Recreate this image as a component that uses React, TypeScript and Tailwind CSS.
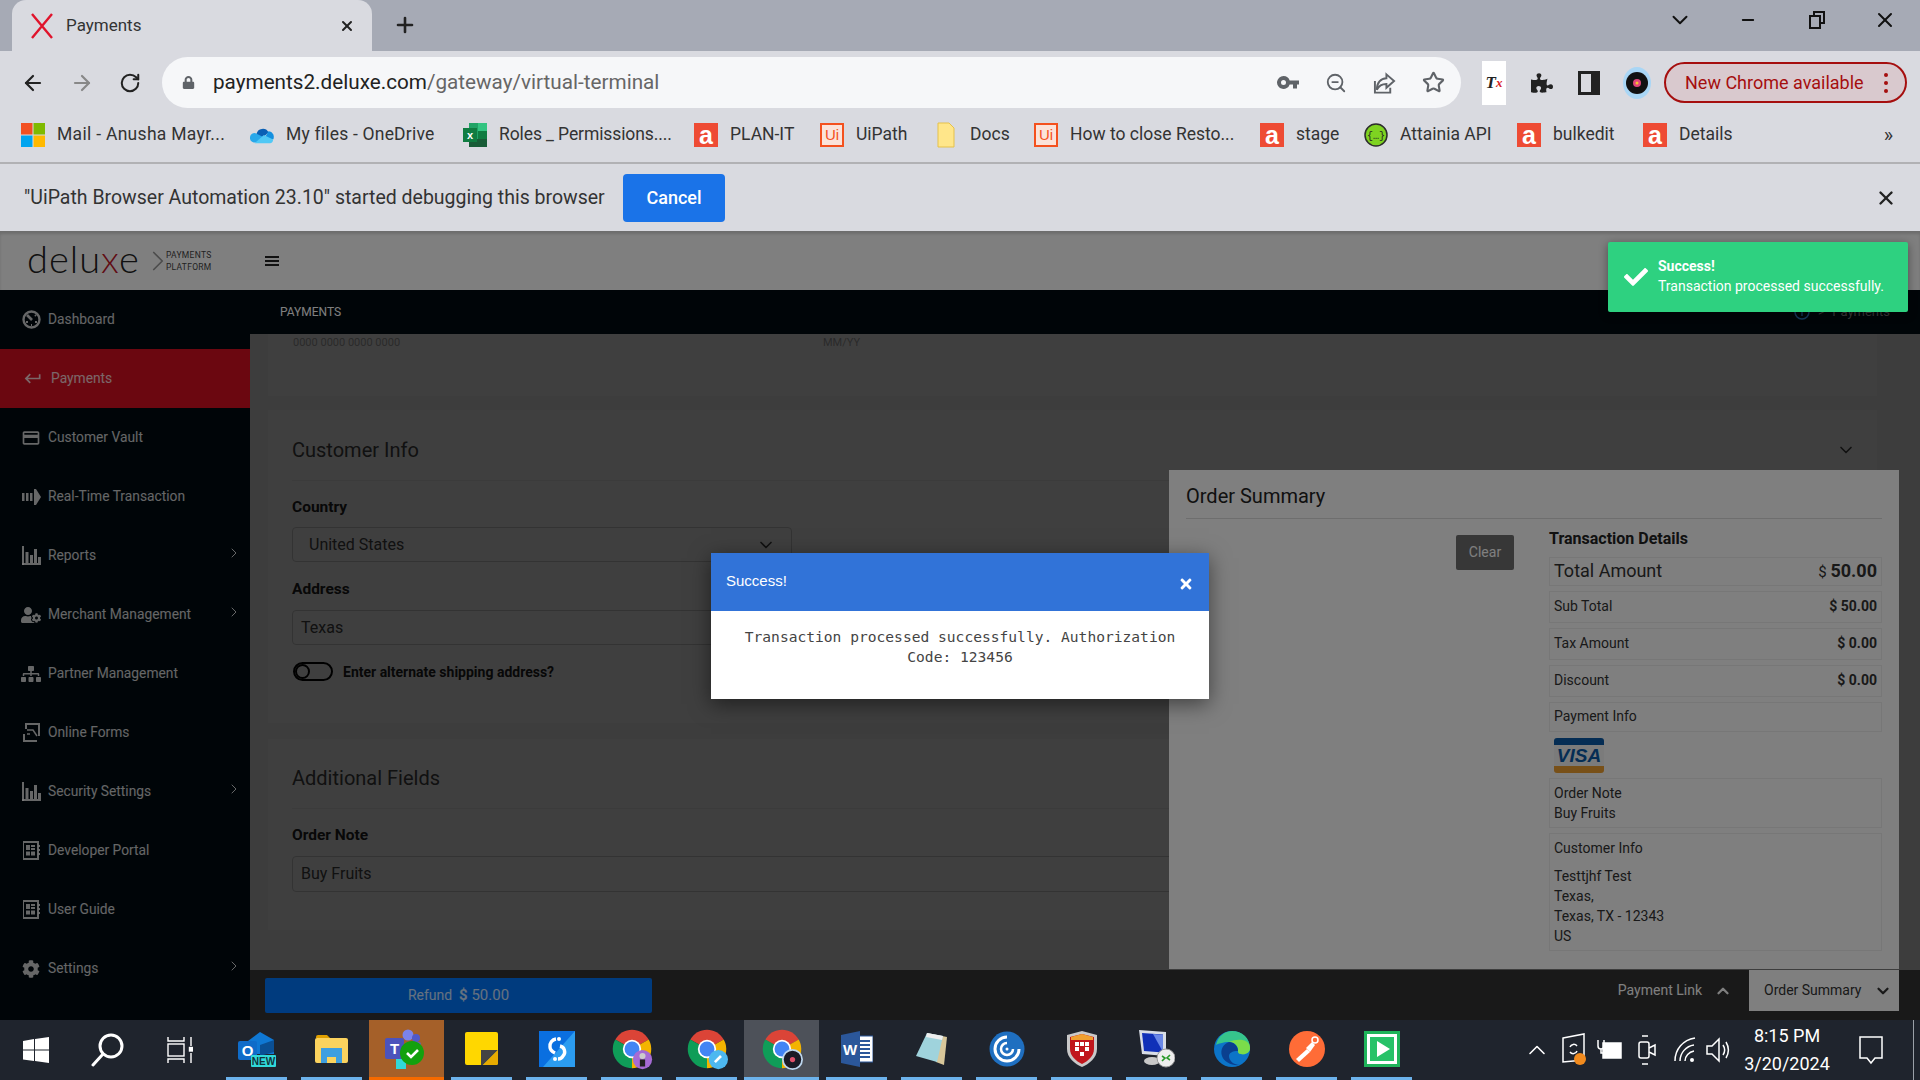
import React from "react";
import { ArrowLeft, ArrowRight, RotateCw, ZoomOut, Star, X, Plus, ChevronDown, ChevronUp, ChevronRight, Minus } from "lucide-react";
import { FaUserCog, FaSitemap, FaCog, FaPuzzlePiece, FaLock, FaCheck, FaTimes } from "react-icons/fa";
import { MdKeyboardReturn, MdPayment } from "react-icons/md";

const DashIcon = () => (
  <svg width="19" height="19" viewBox="0 0 19 19" fill="none" stroke="currentColor">
    <circle cx="9.5" cy="9.5" r="8" strokeWidth="2.4" />
    <path d="M5 5l5 5" strokeWidth="2.6" />
    <path d="M13 5l1 1M4 12h2M13 12h2M9 15h1" strokeWidth="2" />
  </svg>
);

const BarsIcon = () => (
  <svg width="19" height="19" viewBox="0 0 19 19" fill="currentColor">
    <rect x="0" y="0" width="2" height="19" />
    <rect x="0" y="17" width="19" height="2" />
    <rect x="3.5" y="6" width="3" height="11" />
    <rect x="8" y="9" width="3" height="8" />
    <rect x="12" y="3" width="3" height="14" />
    <rect x="16" y="11" width="3" height="6" />
  </svg>
);

const RealTimeIcon = () => (
  <svg width="19" height="16" viewBox="0 0 19 16" fill="currentColor">
    <rect x="0" y="4" width="2.5" height="8" />
    <rect x="4" y="4" width="2.5" height="8" />
    <rect x="8" y="4" width="2.5" height="8" />
    <path d="M12 0h2l5 8-5 8h-2z" />
  </svg>
);

const FormsIcon = () => (
  <svg width="17" height="19" viewBox="0 0 17 19" fill="none" stroke="currentColor" strokeWidth="2">
    <path d="M3 6V1h13v12M14 18H1v-7" />
    <path d="M4 7h6l4 6M4 11h3" strokeWidth="1.5" />
  </svg>
);

const PortalIcon = () => (
  <svg width="17" height="19" viewBox="0 0 17 19" fill="currentColor">
    <path d="M0 1h15v17H0z" fillOpacity="0" stroke="currentColor" strokeWidth="2" />
    <rect x="3" y="4" width="4" height="5" />
    <rect x="8" y="4" width="4" height="2" />
    <rect x="8" y="7" width="4" height="2" />
    <rect x="3" y="10.5" width="4" height="4" />
    <rect x="8" y="10.5" width="4" height="4" />
    <rect x="15.5" y="4" width="1.5" height="2" />
    <rect x="15.5" y="8" width="1.5" height="2" />
    <rect x="15.5" y="12" width="1.5" height="2" />
  </svg>
);

const navItems = [
  { label: "Dashboard", icon: <DashIcon /> },
  { label: "Payments", icon: <MdKeyboardReturn size={23} />, active: true },
  { label: "Customer Vault", icon: <MdPayment size={22} /> },
  { label: "Real-Time Transaction", icon: <RealTimeIcon /> },
  { label: "Reports", icon: <BarsIcon />, arrow: true },
  { label: "Merchant Management", icon: <FaUserCog size={20} />, arrow: true },
  { label: "Partner Management", icon: <FaSitemap size={20} /> },
  { label: "Online Forms", icon: <FormsIcon /> },
  { label: "Security Settings", icon: <BarsIcon />, arrow: true },
  { label: "Developer Portal", icon: <PortalIcon /> },
  { label: "User Guide", icon: <PortalIcon /> },
  { label: "Settings", icon: <FaCog size={18} />, arrow: true },
];

const LetterA = () => (
  <div className="w-6 h-6 bg-[#ee4b34] flex items-center justify-center text-white font-bold text-[25px] leading-[24px] font-['Liberation_Sans',sans-serif]">a</div>
);

const UiIcon = () => (
  <div className="w-6 h-6 border-2 border-[#f4511e] bg-[#fbe3da] flex items-center justify-center text-[#f4511e] text-[15px] leading-none font-['Liberation_Sans',sans-serif]">Ui</div>
);

const MsIcon = () => (
  <svg width="24" height="24" viewBox="0 0 24 24">
    <rect width="11.5" height="11.5" fill="#f25022" />
    <rect x="12.5" width="11.5" height="11.5" fill="#7fba00" />
    <rect y="12.5" width="11.5" height="11.5" fill="#00a4ef" />
    <rect x="12.5" y="12.5" width="11.5" height="11.5" fill="#ffb900" />
  </svg>
);

const OneDriveIcon = () => (
  <svg width="26" height="24" viewBox="0 0 26 24">
    <path d="M7 11a7 7 0 0 1 13-2l-8 8-8-3z" fill="#0a5fb4" />
    <path d="M20 8a6 6 0 0 1 5 9l-9-2z" fill="#1490df" />
    <path d="M6 10a5 5 0 0 0-2 10h6l6-5z" fill="#28a8ea" />
    <path d="M5 21h17a4 4 0 0 0 3-4l-10-5z" fill="#50c8f5" />
  </svg>
);

const ExcelIcon = () => (
  <svg width="24" height="26" viewBox="0 0 24 26">
    <rect x="6" y="1" width="18" height="24" fill="#21a366" />
    <rect x="15" y="1" width="9" height="8" fill="#33c481" />
    <rect x="6" y="17" width="18" height="8" fill="#185c37" />
    <rect x="15" y="9" width="9" height="8" fill="#107c41" />
    <rect x="0" y="6" width="14" height="14" fill="#107c41" />
    <text x="7" y="17" textAnchor="middle" fill="#fff" fontSize="11" fontWeight="700" fontFamily="Liberation Sans">x</text>
  </svg>
);

const DocsIcon = () => (
  <svg width="18" height="26" viewBox="0 0 18 26">
    <path d="M1 1h11l5 5v19H1z" fill="#ffe68a" stroke="#e5c14b" />
  </svg>
);

const AttainiaIcon = () => (
  <svg width="24" height="24" viewBox="0 0 24 24">
    <circle cx="12" cy="12" r="11" fill="#7ed321" stroke="#2d2d2d" strokeWidth="1.5" />
    <text x="12" y="15.5" textAnchor="middle" fill="#222" fontSize="10" fontFamily="Liberation Mono">{"{…}"}</text>
  </svg>
);

const bookmarks = [
  { label: "Mail - Anusha Mayr...", icon: <MsIcon />, width: "w-[168px] tracking-[0.3px]", pad: "pr-[25px]" },
  { label: "My files - OneDrive", icon: <OneDriveIcon />, width: "w-[152px] tracking-[0.2px]", pad: "pr-[25px]" },
  { label: "Roles _ Permissions....", icon: <ExcelIcon />, width: "w-[169px] tracking-[-0.1px]", pad: "pr-[26px]" },
  { label: "PLAN-IT", icon: <LetterA />, width: "w-[65px]", pad: "pr-[25px]" },
  { label: "UiPath", icon: <UiIcon />, width: "w-[51px]", pad: "pr-[27px]" },
  { label: "Docs", icon: <DocsIcon />, width: "w-[39px]", pad: "pr-[25px]" },
  { label: "How to close Resto...", icon: <UiIcon />, width: "w-[165px]", pad: "pr-[25px]" },
  { label: "stage", icon: <LetterA />, width: "w-[44px]", pad: "pr-[24px]" },
  { label: "Attainia API", icon: <AttainiaIcon />, width: "w-[92px]", pad: "pr-[25px]" },
  { label: "bulkedit", icon: <LetterA />, width: "w-[64px]", pad: "pr-[26px]" },
  { label: "Details", icon: <LetterA />, width: "w-[53px]", pad: "" },
];

const ChromeBase = ({ children }: { children?: React.ReactNode }) => (
  <svg width="42" height="42" viewBox="0 0 48 48">
    <path d="M24 24L4.95 13A22 22 0 0 1 43.05 13Z" fill="#db4437" />
    <path d="M24 24L43.05 13A22 22 0 0 1 24 46Z" fill="#f4b400" />
    <path d="M24 24L24 46A22 22 0 0 1 4.95 13Z" fill="#0f9d58" />
    <circle cx="24" cy="24" r="10.5" fill="#fff" />
    <circle cx="24" cy="24" r="8.5" fill="#4285f4" />
    {children}
  </svg>
);

const taskIcons: { key: string; node: React.ReactNode; cell?: string; bar?: string }[] = [
  {
    key: "outlook",
    node: (
      <svg width="38" height="36" viewBox="0 0 38 36">
        <path d="M10 10L22 1l14 8v14H10z" fill="#0f78d4" />
        <path d="M22 14l14-5v12l-14 4z" fill="#0a4f94" />
        <rect x="0" y="10" width="19" height="19" rx="2" fill="#0f6cc9" />
        <text x="9.5" y="25" textAnchor="middle" fill="#fff" fontSize="15" fontWeight="700" fontFamily="Liberation Sans">O</text>
        <rect x="13" y="24" width="25" height="12" rx="1" fill="#30d9d9" />
        <text x="25.5" y="34" textAnchor="middle" fill="#12333a" fontSize="10" fontWeight="700" fontFamily="Liberation Sans">NEW</text>
      </svg>
    ),
  },
  {
    key: "files",
    node: (
      <svg width="34" height="28" viewBox="0 0 34 28">
        <path d="M1 2a2 2 0 0 1 2-2h9l3 3h-14z" fill="#e0a000" />
        <rect x="0" y="3" width="33" height="25" rx="2" fill="#fbd35e" />
        <path d="M6 13h21v15h-6v-6h-9v6H6z" fill="#3e9fe0" />
      </svg>
    ),
  },
  {
    key: "teams",
    cell: "bg-[#a56029]",
    bar: "w-full bg-[#f56a00]",
    node: (
      <svg width="44" height="40" viewBox="0 0 44 40">
        <circle cx="23" cy="6" r="5.5" fill="#7b83eb" />
        <circle cx="31" cy="9" r="4" fill="#5059c9" />
        <rect x="21" y="13" width="15" height="15" rx="2" fill="#6264a7" />
        <rect x="0" y="9" width="19" height="21" rx="2" fill="#4b53bc" />
        <text x="9.5" y="25" textAnchor="middle" fill="#fff" fontSize="15" fontWeight="700" fontFamily="Liberation Sans">T</text>
        <rect x="11" y="30" width="10" height="10" fill="#30d9d9" />
        <circle cx="27" cy="24" r="12" fill="#13a10e" />
        <path d="M22 24l4 4 7-7" fill="none" stroke="#fff" strokeWidth="2.6" />
      </svg>
    ),
  },
  {
    key: "sticky",
    node: (
      <svg width="34" height="34" viewBox="0 0 34 34">
        <rect x="0" y="0" width="33" height="33" rx="2" fill="#ffd700" />
        <path d="M16 33V18h17L18 33z" fill="#444" />
        <path d="M33 18v13a2 2 0 0 1-2 2H18z" fill="#e8ab00" />
      </svg>
    ),
  },
  {
    key: "s-app",
    node: (
      <svg width="36" height="36" viewBox="0 0 36 36">
        <rect width="36" height="36" fill="#0a6fe0" />
        <path d="M36 0v36H4z" fill="#2b9cf0" />
        <path d="M17 8a7 7 0 0 0-6 8c0 3 3 5 5 6" fill="none" stroke="#fff" strokeWidth="3.4" />
        <path d="M21 15a6 6 0 0 1 3 10c-1 2-3 3-5 3" fill="none" stroke="#fff" strokeWidth="3.4" />
        <circle cx="20" cy="8" r="2" fill="#fff" />
        <circle cx="16" cy="28" r="2" fill="#fff" />
      </svg>
    ),
  },
  {
    key: "chrome-a",
    node: (
      <ChromeBase>
        <circle cx="36" cy="36" r="11" fill="#a66bd4" />
        <circle cx="36" cy="32" r="3.5" fill="#ccc" />
        <rect x="33" y="36" width="6" height="8" fill="#222" />
      </ChromeBase>
    ),
  },
  {
    key: "chrome-b",
    node: (
      <ChromeBase>
        <circle cx="37" cy="36" r="11" fill="#4db8f0" />
        <path d="M33 39l7-7" stroke="#fff" strokeWidth="3" />
      </ChromeBase>
    ),
  },
  {
    key: "chrome-c",
    cell: "bg-[#4d5159]",
    bar: "w-full bg-[#6cb2eb]",
    node: (
      <ChromeBase>
        <circle cx="36" cy="36" r="11" fill="#1b1b26" stroke="#bcd6ee" strokeWidth="2" />
        <circle cx="36" cy="36" r="3" fill="#e0506a" />
      </ChromeBase>
    ),
  },
  {
    key: "word",
    node: (
      <svg width="32" height="36" viewBox="0 0 32 36">
        <rect x="9" y="5" width="23" height="26" fill="#fff" stroke="#2b579a" />
        <path d="M18 10h11M18 14h11M18 18h11M18 22h11M18 26h11" stroke="#2b579a" strokeWidth="2" />
        <path d="M0 4l19-4v36L0 32z" fill="#2b579a" />
        <text x="9" y="24" textAnchor="middle" fill="#fff" fontSize="15" fontWeight="700" fontFamily="Liberation Sans">W</text>
      </svg>
    ),
  },
  {
    key: "notepad",
    node: (
      <svg width="34" height="34" viewBox="0 0 34 34">
        <path d="M12 1l20 4-3 28-8-3z" fill="#d8c79a" />
        <path d="M12 1L28 4 22 30 1 24z" fill="#9fd3dc" />
        <path d="M12 1L28 4 27 8 11 5z" fill="#eee" />
      </svg>
    ),
  },
  {
    key: "citrix",
    node: (
      <svg width="36" height="36" viewBox="0 0 36 36">
        <circle cx="18" cy="18" r="17.5" fill="#1f6fc0" />
        <path d="M30 18A12 12 0 1 1 18 6" fill="none" stroke="#fff" strokeWidth="3" />
        <path d="M24 18a6 6 0 1 1-6-6" fill="none" stroke="#fff" strokeWidth="2.5" />
        <circle cx="18" cy="18" r="1.5" fill="#fff" />
      </svg>
    ),
  },
  {
    key: "shield",
    node: (
      <svg width="30" height="36" viewBox="0 0 30 36">
        <path d="M15 0l15 4v14c0 9-8 15-15 18C8 33 0 27 0 18V4z" fill="#c9c9c9" />
        <path d="M15 3l12 3v12c0 7-6 12-12 15C9 30 3 25 3 18V6z" fill="#c1161c" />
        <path d="M4 6l11-3 11 3v3H4z" fill="#f0a030" />
        <path d="M8 11h4v4H8zM13 11h4v4h-4zM18 11h4v4h-4zM8 16h4v4H8zM18 16h4v4h-4zM13 21h4v4h-4z" fill="#fff" />
      </svg>
    ),
  },
  {
    key: "remote",
    node: (
      <svg width="36" height="38" viewBox="0 0 36 38">
        <path d="M0 0l27 2v24L3 24z" fill="#d8dde6" />
        <path d="M3 3l21 1.5v18L5 21z" fill="#1030b8" />
        <path d="M14 4l10 1v17z" fill="#6a88e8" />
        <ellipse cx="13" cy="31" rx="8" ry="4" fill="#c8c8c8" />
        <circle cx="27" cy="28" r="9" fill="#eee" stroke="#999" />
        <path d="M23 31l3-3-3-2M31 25l-3 3 3 2" fill="none" stroke="#2a9a2a" strokeWidth="1.6" />
      </svg>
    ),
  },
  {
    key: "edge",
    node: (
      <svg width="36" height="36" viewBox="0 0 36 36">
        <circle cx="18" cy="18" r="18" fill="#0c74c8" />
        <path d="M2 14C4 5 11 0 18 0c10 0 18 7 18 17 0 5-5 7-9 6-2 0-3-1-3-3 1-4-3-9-9-9-6 0-11 2-13 3z" fill="#36c58c" />
        <path d="M36 17c0 5-5 7-9 6-2 0-3-1-3-3 1-4-3-9-9-9C24 7 36 8 36 17z" fill="#7bdc4a" />
        <path d="M15 11c-6 2-9 8-7 14s10 10 18 9c-6 0-11-4-11-9 0-3 3-5 9-5 0-5-4-9-9-9z" fill="#0a3f8f" />
      </svg>
    ),
  },
  {
    key: "postman",
    node: (
      <svg width="36" height="36" viewBox="0 0 36 36">
        <circle cx="18" cy="18" r="18" fill="#ff6c37" />
        <path d="M7 28l11-10 3 3-11 10z" fill="#fff" />
        <path d="M17 17l6-6 3 3-5 7z" fill="#fff" />
        <circle cx="26" cy="9" r="3" fill="none" stroke="#fff" strokeWidth="1.5" />
      </svg>
    ),
  },
  {
    key: "player",
    node: (
      <svg width="36" height="36" viewBox="0 0 36 36">
        <rect width="36" height="36" fill="#1fb45a" />
        <rect x="3" y="3" width="30" height="30" fill="#fff" />
        <rect x="6" y="6" width="24" height="24" fill="#27c268" />
        <path d="M13 10l13 8-13 8z" fill="#fff" />
      </svg>
    ),
  },
];

const TaskCell = ({ node, cell, bar }: { node: React.ReactNode; cell?: string; bar?: string }) => (
  <div className={`relative w-[75px] h-full flex items-center justify-center ${cell || ""}`}>
    <div className="mt-[-2px] flex items-center justify-center">{node}</div>
    <div className={`absolute bottom-0 h-[3px] ${bar || "w-[61px] bg-[#6cb2eb]"}`} />
  </div>
);

const SummaryRow = ({ label, value, box }: { label: string; value: string; box: string }) => (
  <div className={`flex items-center justify-between border border-[#eeeeee] pl-1 pr-1 pb-[2px] text-[14px] text-[#333] ${box}`}>
    <span>{label}</span>
    <span className="font-bold">{value}</span>
  </div>
);

const VisaCard = () => (
  <div className="w-[50px] h-[35px] ml-[5px] mt-[6px] mb-[5px] rounded-[3px] overflow-hidden flex flex-col bg-[#f6f6f6]">
    <div className="h-[7px] bg-[#0a5aa8]" />
    <div className="flex-1 flex items-center justify-center italic font-bold text-[19px] leading-none text-[#0a5aa8] font-['Liberation_Sans',sans-serif]">VISA</div>
    <div className="h-[7px] bg-[#f0a030]" />
  </div>
);

export default function App() {
  return (
    <div className="relative w-[1920px] h-[1080px] flex flex-col overflow-hidden font-['Roboto',sans-serif] bg-white">
      {/* browser tabs */}
      <div className="h-[51px] bg-[#a6aab5] flex items-end shrink-0">
        <div className="ml-3 w-[360px] h-[51px] bg-[#d9dae0] rounded-t-[14px] flex items-center pl-[18px] pr-[17px] text-[#333]">
          <svg width="24" height="26" viewBox="0 0 24 26" fill="none" stroke="#e0142c" strokeWidth="2.4">
            <path d="M2 1l20 24M22 1L2 25" />
          </svg>
          <span className="ml-3 text-[17px]">Payments</span>
          <X size={16} strokeWidth={3} className="ml-auto text-[#222]" />
        </div>
        <Plus size={24} strokeWidth={2.6} className="ml-[21px] mb-[14px] text-[#222]" />
        <div className="ml-auto flex items-center mb-[18px] text-[#111]">
          <ChevronDown size={26} strokeWidth={1.8} />
          <Minus size={18} strokeWidth={2.4} className="ml-[46px]" />
          <svg width="16" height="18" viewBox="0 0 16 18" fill="none" stroke="#111" strokeWidth="2" className="ml-[52px]">
            <rect x="1" y="5" width="10" height="12" />
            <path d="M5 5V1h10v11h-4" />
          </svg>
          <X size={24} strokeWidth={2} className="ml-[48px] mr-[23px]" />
        </div>
      </div>

      {/* address bar */}
      <div className="h-[63px] bg-[#d9dae0] flex items-center shrink-0">
        <ArrowLeft size={24} strokeWidth={2.2} className="ml-[21px] text-[#222]" />
        <ArrowRight size={24} strokeWidth={2.2} className="ml-[25px] text-[#888]" />
        <RotateCw size={22} strokeWidth={2.2} className="ml-[25px] text-[#222]" />
        <div className="ml-[21px] w-[1299px] h-[51px] rounded-full bg-[#f6f7f9] flex items-center pl-[20px] pr-[16px]">
          <FaLock size={13} className="text-[#5f6368]" />
          <span className="ml-[18px] text-[20.7px] text-[#222]">
            payments2.deluxe.com<span className="text-[#666]">/gateway/virtual-terminal</span>
          </span>
          <div className="ml-auto flex items-center text-[#5f6368] gap-[26px]">
            <svg width="22" height="14" viewBox="0 0 22 14" fill="#5f6368">
              <path d="M6.5 0a6.5 6.5 0 0 1 6.2 4.5H22v4h-2v4h-4v-4h-3.300A6.500 6.500 0 1 1 6.500 0zm0 4a2.500 2.500 0 1 0 0 5 2.500 2.500 0 0 0 0-5z" />
            </svg>
            <ZoomOut size={22} strokeWidth={2} />
            <svg width="23" height="24" viewBox="0 0 24 24" fill="none" stroke="#5f6368" strokeWidth="2">
              <path d="M2 10v12h16v-5" />
              <path d="M14 3l8 7-8 7v-4c-5 0-8 2-10 6 0-7 4-12 10-12z" />
            </svg>
            <Star size={23} strokeWidth={2.2} />
          </div>
        </div>
        <div className="ml-[21px] w-6 h-[44px] bg-white flex items-center justify-center italic font-bold text-[#222] text-[17px] font-['Liberation_Serif',serif]">
          T<span className="text-[#d8232a] text-[13px]">x</span>
        </div>
        <FaPuzzlePiece size={22} className="ml-[25px] text-[#222]" />
        <svg width="22" height="24" viewBox="0 0 22 24" className="ml-[25px]">
          <rect x="1.5" y="1.500" width="19" height="21" fill="none" stroke="#222" strokeWidth="3" />
          <rect x="13" y="2" width="7" height="20" fill="#222" />
        </svg>
        <svg width="28" height="32" viewBox="0 0 28 32" className="ml-[23px]">
          <ellipse cx="14" cy="16" rx="14" ry="16" fill="#a9d6f5" />
          <circle cx="14" cy="16" r="11" fill="#111" />
          <circle cx="14" cy="16" r="4" fill="#e0457b" />
          <circle cx="14" cy="16" r="1.5" fill="#f4c430" />
        </svg>
        <div className="ml-[13px] w-[243px] h-[41px] rounded-full border-2 border-[#a50e0e] bg-[#d9c9ce] flex items-center pl-[19px] pr-[17px] text-[#a50e0e] text-[18px]">
          New Chrome available
          <div className="ml-auto flex flex-col gap-[4px]">
            <span className="w-1 h-1 rounded-full bg-[#a50e0e]" />
            <span className="w-1 h-1 rounded-full bg-[#a50e0e]" />
            <span className="w-1 h-1 rounded-full bg-[#a50e0e]" />
          </div>
        </div>
      </div>

      {/* bookmarks */}
      <div className="h-[48px] pb-[7px] bg-[#d9dae0] flex items-center pl-[21px] pr-[27px] shrink-0 text-[17.5px] text-[#333]">
        {bookmarks.map((b) => (
          <div key={b.label} className={`flex items-center ${b.pad}`}>
            <div className="w-6 h-6 flex items-center justify-center shrink-0">{b.icon}</div>
            <span className={`ml-3 whitespace-nowrap ${b.width}`}>{b.label}</span>
          </div>
        ))}
        <span className="ml-auto text-[20px]">»</span>
      </div>
      <div className="h-[2px] bg-[#b1b1b4] shrink-0" />

      {/* debugging infobar */}
      <div className="h-[67px] bg-[#d9dae0] flex items-center pl-6 pr-[23px] shrink-0 text-[#333]">
        <span className="w-[580px] text-[19.5px] whitespace-nowrap">"UiPath Browser Automation 23.10" started debugging this browser</span>
        <button className="ml-[19px] w-[102px] h-[48px] rounded-[4px] bg-[#1a73e8] text-white font-medium text-[18px]">Cancel</button>
        <X size={22} strokeWidth={2.6} className="ml-auto text-[#222]" />
      </div>

      {/* app */}
      <div className="relative flex-1 flex flex-col min-h-0">
        <div className="h-[59px] bg-white flex items-center pl-[27px] shrink-0 shadow-[inset_0_3px_3px_rgba(0,0,0,0.15)]">
          <span className="font-['Lato',sans-serif] font-light text-[38px] leading-none text-[#222] tracking-[1px] mt-[-5px]">
            delu<span className="text-[#c2182b]">x</span>e
          </span>
          <ChevronRight size={34} strokeWidth={1.2} className="ml-px text-[#999]" />
          <div className="ml-[-9px] w-[43px] text-[8.5px] leading-[12px] text-[#444] tracking-[0.3px]">
            <div>PAYMENTS</div>
            <div>PLATFORM</div>
          </div>
          <div className="ml-[56px] w-[14px] flex flex-col gap-[2px]">
            <span className="h-[2px] bg-[#222]" />
            <span className="h-[2px] bg-[#222]" />
            <span className="h-[2px] bg-[#222]" />
          </div>
        </div>

        <div className="flex-1 flex min-h-0">
          <div className="w-[250px] bg-[#000a10] shrink-0 flex flex-col text-[13.8px] text-white/80">
            {navItems.map((item) => (
              <div key={item.label} className={`h-[59px] shrink-0 flex items-center pl-[21px] pr-[8px] ${item.active ? "bg-[#d60e20]" : ""}`}>
                <div className={`w-[20px] flex items-center justify-center ${item.active ? "translate-x-[2px]" : ""}`}>{item.icon}</div>
                <span className={item.active ? "ml-[10px]" : "ml-[7px]"}>{item.label}</span>
                {item.arrow && <ChevronRight size={16} strokeWidth={1.5} className="ml-auto mt-[-6px]" />}
              </div>
            ))}
          </div>

          <div className="flex-1 flex flex-col min-w-0">
            <div className="h-[44px] bg-[#000a10] shrink-0 flex items-center pl-[30px] pr-[30px] text-[12px] text-white">
              PAYMENTS
              <div className="ml-auto flex items-center gap-2 text-[#2a6fb8]">
                <svg width="16" height="16" viewBox="0 0 16 16" fill="none" stroke="currentColor" strokeWidth="1.5">
                  <circle cx="8" cy="8" r="7" />
                  <path d="M8 4v8" />
                </svg>
                <span className="text-[#777]">{">"}</span>
                <span className="text-[#777] text-[13px]">Payments</span>
              </div>
            </div>

            <div className="relative flex-1 min-h-0 bg-[#f5f5f5] overflow-hidden pl-[18px] pr-[43px] flex flex-col gap-[14px]">
              <div className="h-[62px] bg-white shrink-0 pl-[25px] pt-[2px] flex text-[11px] text-[#aaa]">
                <span className="w-[530px] leading-[14px]">0000 0000 0000 0000</span>
                <span className="leading-[14px]">MM/YY</span>
              </div>

              <div className="h-[313px] bg-white shrink-0 px-[24px] pt-[26px] text-[#444]">
                <div className="flex items-center justify-between h-[28px] mr-[-3px]">
                  <span className="text-[20px]">Customer Info</span>
                  <ChevronDown size={20} strokeWidth={2} />
                </div>
                <div className="mt-[16px] h-px bg-[#eeeeee]" />
                <div className="mt-[16px] h-5 leading-5 font-bold text-[15.5px] text-[#222]">Country</div>
                <div className="mt-[10px] w-[500px] h-[35px] rounded-[4px] border border-[#ccc] flex items-center justify-between pl-4 pr-[15px] text-[16px]">
                  United States
                  <ChevronDown size={20} strokeWidth={2} />
                </div>
                <div className="mt-[17px] h-5 leading-5 font-bold text-[15.5px] text-[#222]">Address</div>
                <div className="mt-[11px] w-[900px] h-[35px] rounded-[4px] border border-[#ccc] flex items-center pl-2 text-[16px]">Texas</div>
                <div className="mt-[15px] ml-px flex items-center">
                  <div className="w-[40px] h-[19px] rounded-full border-2 border-[#000] flex items-center">
                    <span className="w-[15px] h-[15px] rounded-full border-2 border-[#000]" />
                  </div>
                  <span className="ml-[10px] mt-[2px] font-bold text-[14px] text-[#222]">Enter alternate shipping address?</span>
                </div>
              </div>

              <div className="h-[191px] bg-white shrink-0 mt-[2px] px-[24px] pt-[25px] text-[#444]">
                <div className="h-[28px] leading-[28px] text-[20px]">Additional Fields</div>
                <div className="mt-[16px] h-px bg-[#eeeeee]" />
                <div className="mt-[16px] h-5 leading-5 font-bold text-[15.5px] text-[#222]">Order Note</div>
                <div className="mt-[11px] h-[36px] rounded-[4px] border border-[#ccc] flex items-center pl-2 text-[16px]">Buy Fruits</div>
              </div>

              {/* backdrop of the order drawer */}
              <div className="absolute inset-0 bg-black/50" />

              <div className="absolute right-[21px] bottom-px w-[730px] h-[499px] bg-white px-[17px] text-[#222]">
                <div className="h-[49px] pt-[4px] border-b border-[#dddddd] flex items-center text-[20px]">Order Summary</div>
                <div className="flex mt-[10px]">
                  <div className="flex-1 flex justify-end pr-[35px]">
                    <button className="mt-[6px] w-[58px] h-[35px] rounded-[2px] bg-[#6f6f6f] text-white text-[14px]">Clear</button>
                  </div>
                  <div className="w-[333px] flex flex-col">
                    <div className="h-5 leading-5 font-bold text-[16px] mb-2">Transaction Details</div>
                    <div className="h-[29px] pb-[2px] flex items-center justify-between border border-[#eeeeee] px-1 mb-[5px] text-[18px] text-[#333]">
                      <span>Total Amount</span>
                      <span className="font-bold"><span className="font-normal text-[15px]">$ </span>50.00</span>
                    </div>
                    <SummaryRow label="Sub Total" value="$ 50.00" box="h-[32px] mb-[5px]" />
                    <SummaryRow label="Tax Amount" value="$ 0.00" box="h-[32px] mb-[5px]" />
                    <SummaryRow label="Discount" value="$ 0.00" box="h-[32px] mb-[5px]" />
                    <div className="h-[30px] pb-[2px] flex items-center border border-[#eeeeee] pl-1 text-[14px] text-[#333]">Payment Info</div>
                    <VisaCard />
                    <div className="h-[50px] border border-[#eeeeee] pl-1 pt-1 text-[14px] leading-5 text-[#333]">
                      <div>Order Note</div>
                      <div>Buy Fruits</div>
                    </div>
                    <div className="h-[118px] mt-[5px] border border-[#eeeeee] pl-1 pt-1 text-[14px] leading-5 text-[#333]">
                      <div className="mb-2">Customer Info</div>
                      <div>Testtjhf Test</div>
                      <div>Texas,</div>
                      <div>Texas, TX - 12343</div>
                      <div>US</div>
                    </div>
                  </div>
                </div>
              </div>
            </div>

            <div className="h-[50px] bg-[#333333] shrink-0 flex pl-[15px] pr-[21px] text-[14px]">
              <button className="mt-2 w-[387px] h-[35px] rounded-[2px] bg-[#0076fc] text-white/80">
                Refund&nbsp;&nbsp;<span className="text-[15px]"><b>$</b> 50.00</span>
              </button>
              <div className="ml-auto flex h-[41px] items-center text-white">
                Payment Link
                <ChevronUp size={18} strokeWidth={3} className="ml-[12px]" />
              </div>
              <div className="ml-[17px] w-[150px] h-[41px] bg-white text-[#333] flex items-center justify-between pl-[15px] pr-[7px]">
                Order Summary
                <ChevronDown size={18} strokeWidth={3} />
              </div>
            </div>
          </div>
        </div>

        {/* modal backdrop */}
        <div className="absolute inset-0 bg-black/50" />

        <div className="absolute left-[711px] top-[322px] w-[498px] bg-white shadow-[0_5px_20px_rgba(0,0,0,0.5)]">
          <div className="h-[58px] bg-[#3173d8] flex items-center justify-between pl-[15px] pr-[15px] text-white">
            <span className="font-['Liberation_Sans',sans-serif] text-[15px] mt-[-2px]">Success!</span>
            <FaTimes size={16} className="mt-[3px]" />
          </div>
          <div className="h-[88px] pt-4 px-4 text-center font-['DejaVu_Sans_Mono',monospace] text-[14.6px] leading-5 text-[#444]">
            Transaction processed successfully. Authorization Code: 123456
          </div>
        </div>

        <div className="absolute right-3 top-[11px] w-[300px] h-[70px] rounded-[2px] bg-[#2ed180] shadow-[0_2px_10px_rgba(0,0,0,0.4)] flex items-center pl-4 text-white">
          <FaCheck size={24} />
          <div className="ml-[10px] text-[14px] leading-5 mt-[-2px]">
            <div className="font-bold">Success!</div>
            <div>Transaction processed successfully.</div>
          </div>
        </div>
      </div>

      {/* windows taskbar */}
      <div className="h-[60px] bg-[#1f242d] flex shrink-0 text-white">
        <div className="w-[72px] flex items-center justify-center">
          <svg width="26" height="26" viewBox="0 0 26 26" fill="#fff">
            <path d="M0 4l11-2v10.5H0zM12 2l14-2v12.5H12zM0 13.5h11V24L0 22.5zM12 13.5h14V26l-14-2z" />
          </svg>
        </div>
        <div className="w-[72px] flex items-center justify-center">
          <svg width="34" height="34" viewBox="0 0 34 34" fill="none" stroke="#fff" strokeWidth="3">
            <circle cx="20" cy="13" r="11" />
            <path d="M12 21L2 32" strokeLinecap="round" />
          </svg>
        </div>
        <div className="w-[72px] flex items-center justify-center">
          <svg width="26" height="26" viewBox="0 0 26 26" fill="none" stroke="#fff" strokeWidth="1.4">
            <path d="M1 0v4h16V0M1 26v-4h16v4" />
            <rect x="1" y="7" width="16" height="12" />
            <path d="M24 0v9M24 16v10" />
            <rect x="22.5" y="10.5" width="3" height="3.5" fill="#fff" />
          </svg>
        </div>
        <div className="w-[3px]" />
        {taskIcons.map((t) => (
          <TaskCell key={t.key} node={t.node} cell={t.cell} bar={t.bar} />
        ))}
        <div className="ml-auto flex items-center text-white">
          <ChevronUp size={28} strokeWidth={1.4} />
          <svg width="26" height="34" viewBox="0 0 26 34" fill="none" stroke="#fff" strokeWidth="1.5" className="ml-[10px]">
            <path d="M2 5l21-4v26l-21 2z" />
            <path d="M9 14a4 4 0 0 1 7-1M16 18a4 4 0 0 1-7 1" />
            <circle cx="19" cy="26" r="6" fill="#f28b1e" stroke="none" />
          </svg>
          <svg width="26" height="22" viewBox="0 0 26 22" fill="none" stroke="#fff" strokeWidth="1.5" className="ml-[10px]">
            <rect x="6" y="4" width="18" height="15" fill="#fff" />
            <path d="M1 1v6a3 3 0 0 0 6 0V1M4 10v4h3" />
          </svg>
          <svg width="18" height="32" viewBox="0 0 18 32" fill="none" stroke="#fff" strokeWidth="1.5" className="ml-[15px]">
            <rect x="1" y="8" width="10" height="16" rx="2" />
            <path d="M11 14l6-3v10l-6-3M4 2h6M4 30h6" />
          </svg>
          <svg width="22" height="26" viewBox="0 0 22 26" fill="none" stroke="#fff" strokeWidth="1.5" className="ml-[18px]">
            <path d="M1 24C1 12 9 3 21 1M6 24c0-8 6-15 14-16M11 24c0-5 4-9 9-10" />
            <circle cx="18" cy="23" r="2" fill="#fff" stroke="none" />
          </svg>
          <svg width="24" height="26" viewBox="0 0 24 26" fill="none" stroke="#fff" strokeWidth="1.5" className="ml-[10px]">
            <path d="M1 9v8h5l7 7V2L6 9z" />
            <path d="M17 8c2 3 2 7 0 10M20 5c3 5 3 11 0 16" />
          </svg>
          <div className="ml-[7px] w-[100px] text-center text-[18px] leading-[28px]">
            <div>8:15 PM</div>
            <div>3/20/2024</div>
          </div>
          <svg width="24" height="34" viewBox="0 0 24 34" fill="none" stroke="#fff" strokeWidth="1.5" className="ml-[22px]">
            <path d="M1 4h22v21h-7l-4 5-4-5H1z" />
          </svg>
          <div className="ml-[30px] w-px h-full bg-[#9aa0a8]" />
          <div className="w-[6px]" />
        </div>
      </div>
    </div>
  );
}
